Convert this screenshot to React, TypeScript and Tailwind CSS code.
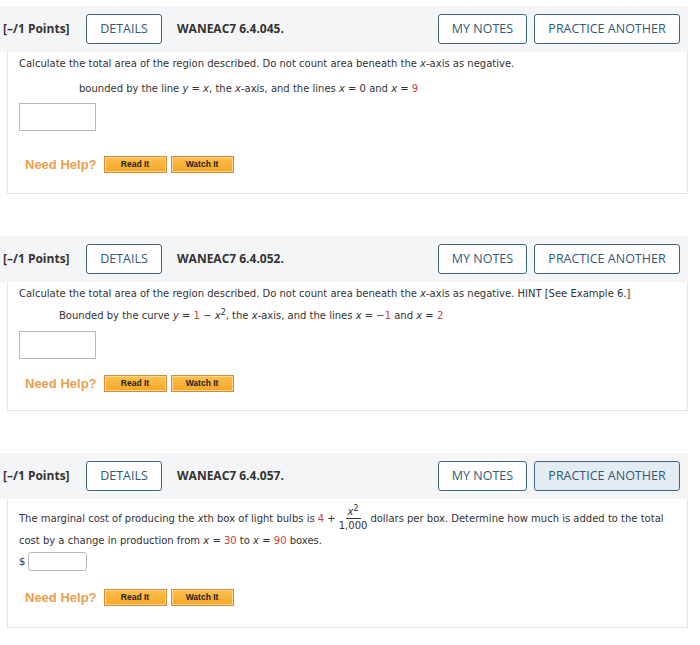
import React from 'react'

const font = { fontFamily: '"DejaVu Sans", Verdana, sans-serif' }
const headFont = { fontFamily: '"Open Sans", "DejaVu Sans", sans-serif' }

function Red({ children }: { children: React.ReactNode }) {
  return <span className="text-[#c8463b]">{children}</span>
}

function V({ children }: { children: React.ReactNode }) {
  return <i>{children}</i>
}

function HelpRow() {
  return (
    <div className="flex items-center gap-[7px]">
      <span className="text-[13px] font-bold text-[#e9a04f]" style={{ fontFamily: '"Liberation Sans", Arial, sans-serif' }}>
        Need Help?
      </span>
      <div className="flex gap-[4px]">
        {['Read It', 'Watch It'].map((t) => (
          <div
            key={t}
            className="flex h-[17px] w-[63px] items-center justify-center border border-[#d38a3c] bg-gradient-to-b from-[#fcc04e] to-[#f4a623] text-[8.5px] font-bold text-[#222] shadow-[inset_0_0_0_1px_#fbd78a]"
            style={{ fontFamily: '"Liberation Sans", Arial, sans-serif' }}
          >
            {t}
          </div>
        ))}
      </div>
    </div>
  )
}

function Header({ code, active }: { code: string; active?: boolean }) {
  return (
    <div className="flex h-[46px] items-center bg-[#f4f5f6] pl-[3px] pr-[8px]" style={headFont}>
      <span className="w-[83px] text-[12px] font-bold text-[#333]">[–/1 Points]</span>
      <div className="flex h-[30px] w-[76px] items-center justify-center rounded-[3px] border-[1.5px] border-[#3d6883] bg-white text-[12.5px] text-[#2f5a78]">
        DETAILS
      </div>
      <span className="ml-[15px] text-[12px] font-bold text-[#333]">{code}</span>
      <div className="ml-auto flex gap-[7px]">
        <div className="flex h-[30px] w-[89px] items-center justify-center rounded-[3px] border-[1.5px] border-[#3d6883] bg-white text-[12.5px] text-[#2f5a78]">
          MY NOTES
        </div>
        <div
          className={`flex h-[30px] w-[146px] items-center justify-center rounded-[3px] border-[1.5px] border-[#3d6883] text-[12.5px] text-[#2f5a78] ${
            active ? 'bg-[#e4ecf3]' : 'bg-white'
          }`}
        >
          PRACTICE ANOTHER
        </div>
      </div>
    </div>
  )
}

function Card({ code, active, children }: { code: string; active?: boolean; children: React.ReactNode }) {
  return (
    <div className="w-[688px]">
      <Header code={code} active={active} />
      <div className="ml-[7px] border-x border-b border-[#e4e4e4] bg-white pl-[11px]">{children}</div>
    </div>
  )
}

export default function App() {
  return (
    <div className="h-[645px] w-[700px] bg-white pt-[6px] text-[10px] text-[#333]" style={font}>
      <Card code="WANEAC7 6.4.045.">
        <div className="h-[141px] pt-[5px]">
          <p className="leading-[14px]">
            Calculate the total area of the region described. Do not count area beneath the <V>x</V>-axis as negative.
          </p>
          <p className="mt-[11px] pl-[60px] leading-[14px]">
            bounded by the line <V>y</V> = <V>x</V>, the <V>x</V>-axis, and the lines <V>x</V> = 0 and <V>x</V> = <Red>9</Red>
          </p>
          <div className="mt-[7px] h-[28px] w-[77px] border border-[#b9b9b9] bg-white" />
          <div className="mt-[24px] pl-[6px]">
            <HelpRow />
          </div>
        </div>
      </Card>

      <div className="h-[42px]" />

      <Card code="WANEAC7 6.4.052.">
        <div className="h-[128px] pt-[5px]">
          <p className="whitespace-nowrap leading-[14px]">
            Calculate the total area of the region described. Do not count area beneath the <V>x</V>-axis as negative. HINT [See Example 6.]
          </p>
          <p className="mt-[8px] pl-[40px] leading-[14px]">
            Bounded by the curve <V>y</V> = <Red>1</Red> − <V>x</V>
            <sup className="text-[8px]">2</sup>, the <V>x</V>-axis, and the lines <V>x</V> = −<Red>1</Red> and <V>x</V> ={' '}
            <Red>2</Red>
          </p>
          <div className="mt-[8px] h-[28px] w-[77px] border border-[#b9b9b9] bg-white" />
          <div className="mt-[15px] pl-[6px]">
            <HelpRow />
          </div>
        </div>
      </Card>

      <div className="h-[42px]" />

      <Card code="WANEAC7 6.4.057." active>
        <div className="h-[128px] pt-[6px]">
          <div className="flex items-center whitespace-nowrap leading-[14px]">
            <span>
              The marginal cost of producing the <V>x</V>th box of light bulbs is <Red>4</Red> +
            </span>
            <span className="mx-[3px] inline-flex flex-col items-center">
              <span className="border-b border-[#333] px-[2px] text-center leading-[13px]">
                <V>x</V>
                <sup className="text-[8px]">2</sup>
              </span>
              <span className="leading-[13px]">1,000</span>
            </span>
            <span>dollars per box. Determine how much is added to the total</span>
          </div>
          <p className="mt-[2px] leading-[14px]">
            cost by a change in production from <V>x</V> = <Red>30</Red> to <V>x</V> = <Red>90</Red> boxes.
          </p>
          <div className="mt-[4px] flex items-center gap-[3px]">
            <span>$</span>
            <div className="h-[19px] w-[59px] rounded-[3px] border border-[#b9b9b9] bg-white" />
          </div>
          <div className="mt-[17px] pl-[6px]">
            <HelpRow />
          </div>
        </div>
      </Card>
    </div>
  )
}
